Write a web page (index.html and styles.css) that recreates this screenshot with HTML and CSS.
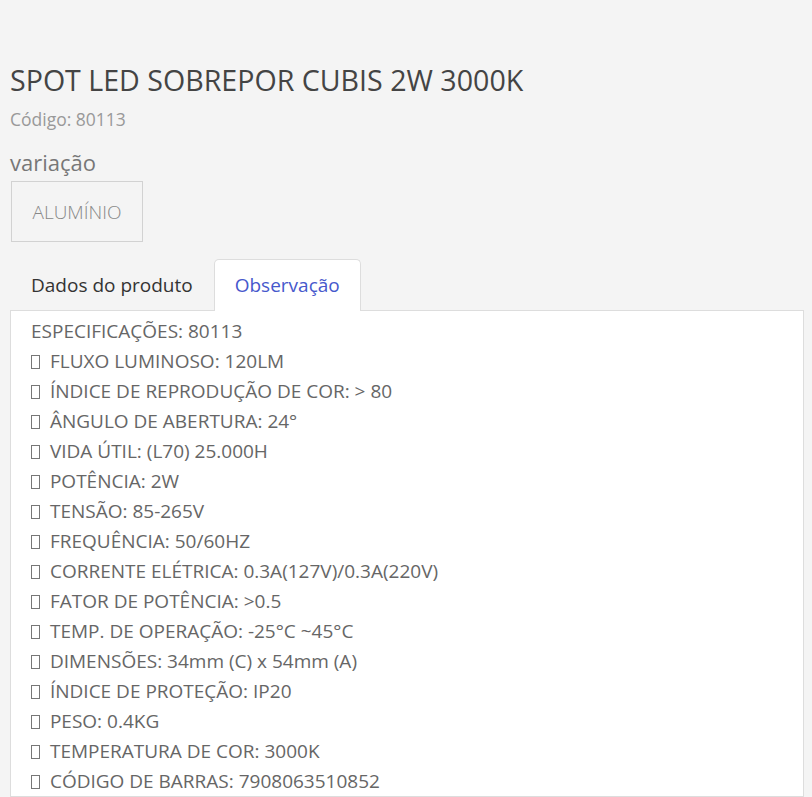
FILE: index.html
```html
<!DOCTYPE html>
<html lang="pt-BR">

<head>
    <meta charset="UTF-8">
    <meta name="viewport" content="width=device-width, initial-scale=1.0">
    <title>SPOT LED SOBREPOR CUBIS 2W 3000K</title>
    <link rel="stylesheet" href="styles.css">
</head>

<body>

    <div class="produto">
        <h1 class="produto-titulo">SPOT LED SOBREPOR CUBIS 2W 3000K</h1>
        <p class="produto-codigo">Código: 80113</p>

        <p class="variacao-label">variação</p>
        <div class="variacoes">
            <button class="variacao">ALUMÍNIO</button>
        </div>

        <ul class="abas">
            <li class="aba">Dados do produto</li>
            <li class="aba ativa">Observação</li>
        </ul>

        <!-- conteudo da aba ativa -->
        <div class="aba-conteudo">
            <p>ESPECIFICAÇÕES: 80113</p>
            <p><span class="marca"></span> FLUXO LUMINOSO: 120LM</p>
            <p><span class="marca"></span> ÍNDICE DE REPRODUÇÃO DE COR: &gt; 80</p>
            <p><span class="marca"></span> ÂNGULO DE ABERTURA: 24°</p>
            <p><span class="marca"></span> VIDA ÚTIL: (L70) 25.000H</p>
            <p><span class="marca"></span> POTÊNCIA: 2W</p>
            <p><span class="marca"></span> TENSÃO: 85-265V</p>
            <p><span class="marca"></span> FREQUÊNCIA: 50/60HZ</p>
            <p><span class="marca"></span> CORRENTE ELÉTRICA: 0.3A(127V)/0.3A(220V)</p>
            <p><span class="marca"></span> FATOR DE POTÊNCIA: &gt;0.5</p>
            <p><span class="marca"></span> TEMP. DE OPERAÇÃO: -25°C ~45°C</p>
            <p><span class="marca"></span> DIMENSÕES: 34mm (C) x 54mm (A)</p>
            <p><span class="marca"></span> ÍNDICE DE PROTEÇÃO: IP20</p>
            <p><span class="marca"></span> PESO: 0.4KG</p>
            <p><span class="marca"></span> TEMPERATURA DE COR: 3000K</p>
            <p><span class="marca"></span> CÓDIGO DE BARRAS: 7908063510852</p>
        </div>
    </div>

</body>

</html>
```

FILE: styles.css
```css
body {
    margin: 0;
    font-family: "Open Sans", "Noto Sans", Arial, sans-serif;
    background-color: #f4f4f4;
    color: #666;
    font-size: 19px;
}

.produto {
    padding: 58px 8px 0 10px;
}

.produto-titulo {
    margin: 0;
    font-size: 28.6px;
    font-weight: 400;
    line-height: 44px;
    color: #444;
}

.produto-codigo {
    margin: 4px 0 0;
    font-size: 17.5px;
    line-height: 26px;
    color: #999;
}

.variacao-label {
    margin: 16px 0 0;
    font-size: 22px;
    line-height: 28px;
    color: #777;
}

.variacoes {
    margin-top: 5px;
}

.variacao {
    margin-left: 1px;
    width: 132px;
    height: 61px;
    padding: 0;
    font-family: inherit;
    font-size: 19px;
    font-weight: 300;
    color: #888;
    background: transparent;
    border: 1px solid #d2d2d2;
}

.abas {
    display: flex;
    list-style: none;
    margin: 17px 0 0;
    padding: 0;
}

.aba {
    padding: 12px 20px;
    line-height: 27px;
    border: 1px solid transparent;
    border-bottom: none;
    border-radius: 5px 5px 0 0;
    color: #333;
    margin-bottom: -1px;
}

.aba.ativa {
    background-color: #fff;
    border-color: #ddd;
    color: #4658cc;
    position: relative;
}

.aba-conteudo {
    background-color: #fff;
    border: 1px solid #ddd;
    padding: 5px 20px 0;
}

.aba-conteudo p {
    margin: 0;
    line-height: 30px;
    white-space: nowrap;
}

.marca {
    display: inline-block;
    width: 7px;
    height: 12px;
    border: 1px solid #777;
    vertical-align: -1px;
    margin-right: 5px;
}
```
